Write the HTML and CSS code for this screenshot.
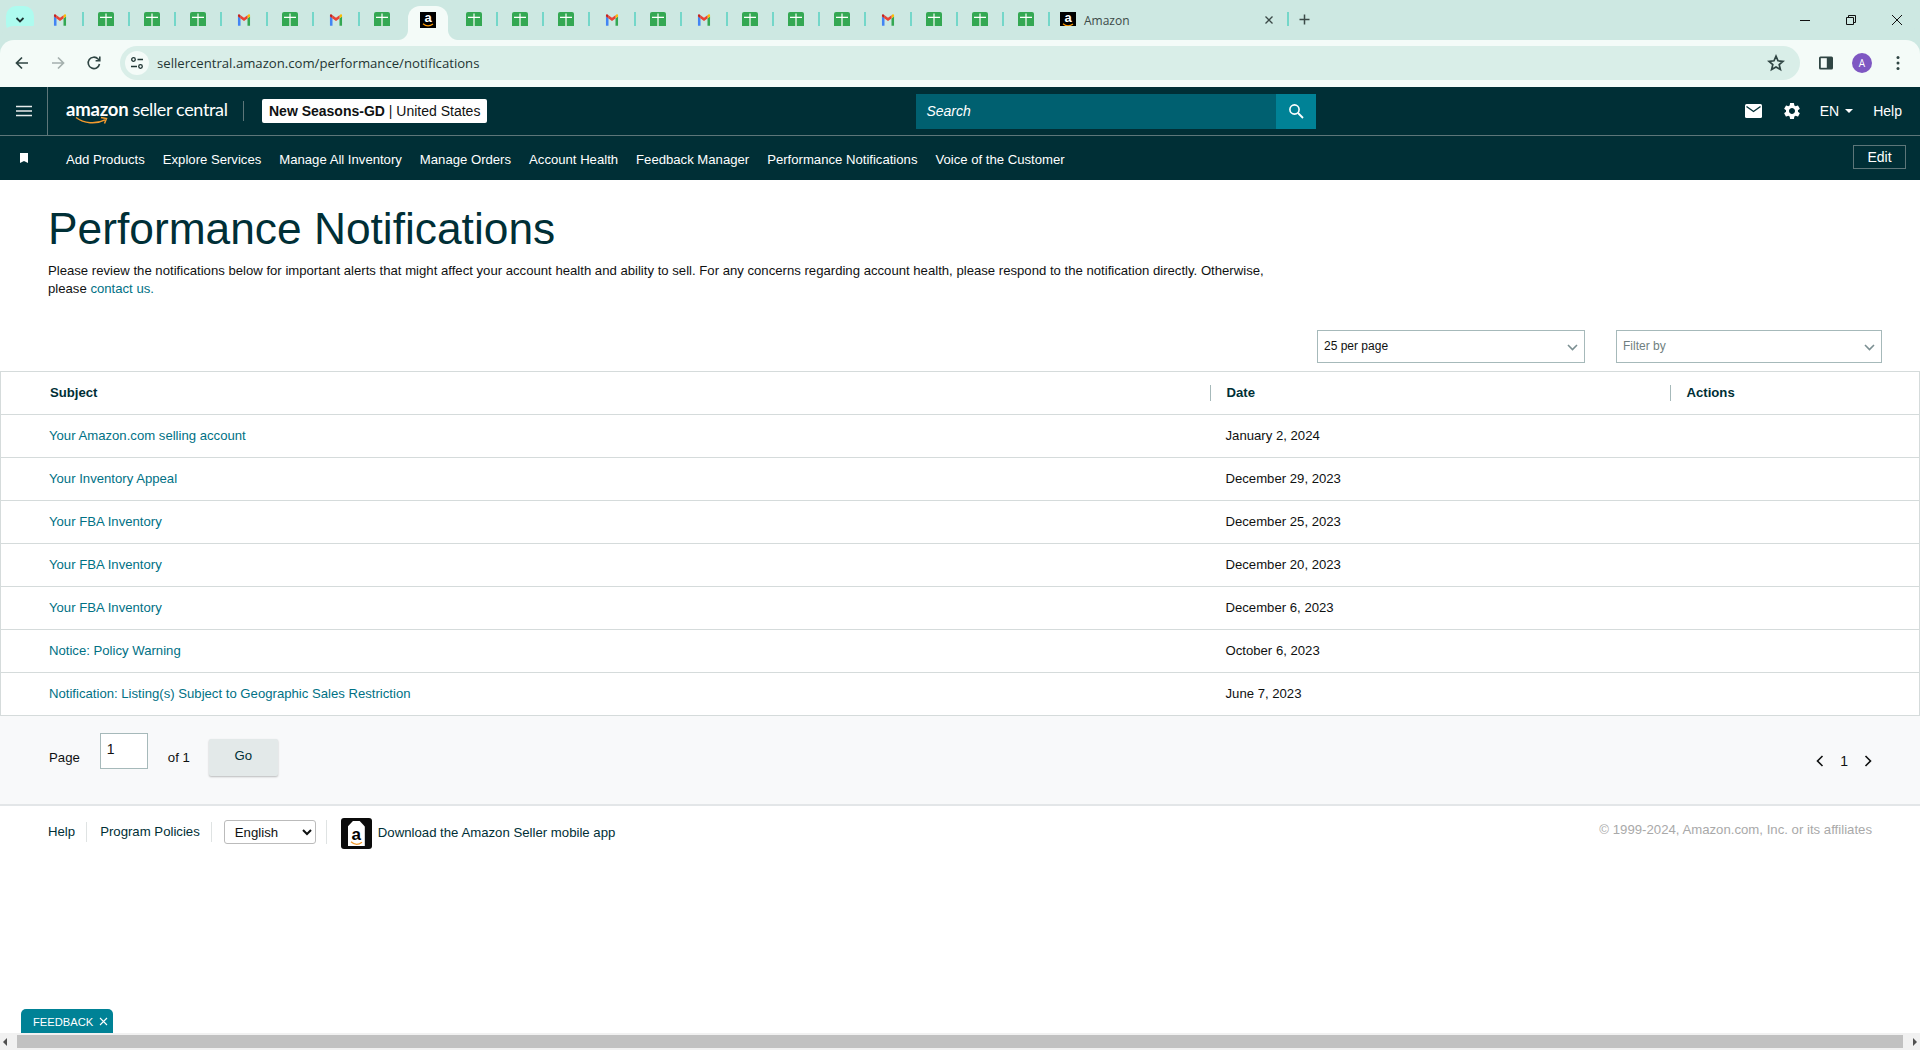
FILE: index.html
```html
<!DOCTYPE html>
<html lang="en">
<head>
<meta charset="utf-8">
<title>Performance Notifications</title>
<link rel="stylesheet" href="styles.css">
</head>
<body>
<svg class="defs" width="0" height="0" aria-hidden="true">
  <symbol id="gm" viewBox="0 0 16 13">
    <path d="M1.1 13V2.5L4 4.7V13H1.1Z" fill="#4285f4"/>
    <path d="M12 13V4.7l2.9-2.2V13H12Z" fill="#34a853"/>
    <path d="M12 4.7V1l1-.7c.9-.6 1.9 0 1.9 1v1.2L12 4.7Z" fill="#fbbc04"/>
    <path d="M4 4.7V1l4 3 4-3v3.7L8 7.7 4 4.7Z" fill="#ea4335"/>
    <path d="M1.1 2.5V1.3c0-1 1-1.600 1.900-1L4 1v3.700L1.100 2.500Z" fill="#c5221f"/>
  </symbol>
  <symbol id="sh" viewBox="0 0 16 16">
    <rect width="16" height="16" rx="2" fill="#34a853"/>
    <path d="M2 4.800h12v1.200H2zM7.400 1.500h1.200v13H7.400z" fill="#fff"/>
  </symbol>
</svg>

<div class="tabstrip">
  <div class="tab-menu"><svg width="12" height="12" viewBox="0 0 12 12"><path d="M2.500 4l3.500 3.500L9.500 4" fill="none" stroke="#1f3533" stroke-width="1.800"/></svg></div>
  <div class="tabs">
    <div class="tab sep"><svg class="gm"><use href="#gm"/></svg></div>
    <div class="tab sep"><svg class="sh"><use href="#sh"/></svg></div>
    <div class="tab sep"><svg class="sh"><use href="#sh"/></svg></div>
    <div class="tab sep"><svg class="sh"><use href="#sh"/></svg></div>
    <div class="tab sep"><svg class="gm"><use href="#gm"/></svg></div>
    <div class="tab sep"><svg class="sh"><use href="#sh"/></svg></div>
    <div class="tab sep"><svg class="gm"><use href="#gm"/></svg></div>
    <div class="tab"><svg class="sh"><use href="#sh"/></svg></div>
    <div class="tab active"><span class="fav">a<svg width="12" height="4" viewBox="0 0 12 4"><path d="M1 .8c3 2.400 7 2.400 10 .2" fill="none" stroke="#f90" stroke-width="1.300"/></svg></span></div>
    <div class="tab sep"><svg class="sh"><use href="#sh"/></svg></div>
    <div class="tab sep"><svg class="sh"><use href="#sh"/></svg></div>
    <div class="tab sep"><svg class="sh"><use href="#sh"/></svg></div>
    <div class="tab sep"><svg class="gm"><use href="#gm"/></svg></div>
    <div class="tab sep"><svg class="sh"><use href="#sh"/></svg></div>
    <div class="tab sep"><svg class="gm"><use href="#gm"/></svg></div>
    <div class="tab sep"><svg class="sh"><use href="#sh"/></svg></div>
    <div class="tab sep"><svg class="sh"><use href="#sh"/></svg></div>
    <div class="tab sep"><svg class="sh"><use href="#sh"/></svg></div>
    <div class="tab sep"><svg class="gm"><use href="#gm"/></svg></div>
    <div class="tab sep"><svg class="sh"><use href="#sh"/></svg></div>
    <div class="tab sep"><svg class="sh"><use href="#sh"/></svg></div>
    <div class="tab sep"><svg class="sh"><use href="#sh"/></svg></div>
    <div class="tab-wide">
      <span class="fav">a<svg width="12" height="4" viewBox="0 0 12 4"><path d="M1 .8c3 2.400 7 2.400 10 .2" fill="none" stroke="#f90" stroke-width="1.300"/></svg></span>
      <span class="tab-title">Amazon</span>
      <svg class="tab-x" width="10" height="10" viewBox="0 0 10 10"><path d="M1.500 1.500l7 7M8.500 1.500l-7 7" stroke="#3c4a48" stroke-width="1.300"/></svg>
    </div>
    <svg class="tab-new" width="11" height="11" viewBox="0 0 11 11"><path d="M5.500 .5v10M.5 5.500h10" stroke="#3c4a48" stroke-width="1.500"/></svg>
  </div>
  <div class="win">
    <svg width="12" height="12" viewBox="0 0 12 12"><path d="M1 6.500h10" stroke="#111" stroke-width="1"/></svg>
    <svg width="12" height="12" viewBox="0 0 12 12"><path d="M1.500 3.500h7v7h-7zM3.500 3.500v-2h7v7h-2" fill="none" stroke="#111" stroke-width="1"/></svg>
    <svg width="12" height="12" viewBox="0 0 12 12"><path d="M1 1l10 10M11 1L1 11" stroke="#111" stroke-width="1"/></svg>
  </div>
</div>

<div class="toolbar">
  <svg class="tb-back" width="16" height="16" viewBox="0 0 16 16"><path d="M14 8H3M8 2.500L2.500 8 8 13.500" fill="none" stroke="#2f4543" stroke-width="1.700"/></svg>
  <svg class="tb-fwd" width="16" height="16" viewBox="0 0 16 16"><path d="M2 8h11M8 2.500L13.500 8 8 13.500" fill="none" stroke="#a4b0ae" stroke-width="1.700"/></svg>
  <svg class="tb-rel" width="16" height="16" viewBox="0 0 16 16"><path d="M13.500 9a5.700 5.700 0 1 1-1.400-5L13.600 5.500M13.800 1.500v4.200H9.600" fill="none" stroke="#2f4543" stroke-width="1.600"/></svg>
  <div class="omni">
    <span class="site"><svg width="14" height="14" viewBox="0 0 14 14"><circle cx="3.500" cy="3.500" r="1.800" fill="none" stroke="#1f3533" stroke-width="1.300"/><path d="M7.500 3.500H13M1 10.500h6" stroke="#1f3533" stroke-width="1.500"/><circle cx="10.500" cy="10.500" r="1.800" fill="none" stroke="#1f3533" stroke-width="1.300"/></svg></span>
    <span class="url">sellercentral.amazon.com/performance/notifications</span>
    <svg class="star" width="18" height="18" viewBox="0 0 18 18"><path d="M9 2.200l2 4.600 5 .5-3.800 3.300 1.200 4.900L9 12.900l-4.400 2.600 1.200-4.900L2 7.300l5-.5L9 2.200Z" fill="none" stroke="#2f4543" stroke-width="1.700"/></svg>
  </div>
  <svg class="tb-side" width="16" height="16" viewBox="0 0 16 16"><rect x="1" y="1.500" width="14" height="13" rx="1.500" fill="#2f4543"/><rect x="2.800" y="3.200" width="6" height="9.600" fill="#f4fbf8"/></svg>
  <span class="avatar">A</span>
  <svg class="tb-dots" width="4" height="16" viewBox="0 0 4 16"><circle cx="2" cy="2.500" r="1.500" fill="#2f4543"/><circle cx="2" cy="8" r="1.500" fill="#2f4543"/><circle cx="2" cy="13.500" r="1.500" fill="#2f4543"/></svg>
</div>

<header class="sc-top">
  <div class="burger"><svg width="16" height="12" viewBox="0 0 16 12"><path d="M0 1.500h16M0 6h16M0 10.500h16" stroke="#e7ecec" stroke-width="1.700"/></svg></div>
  <div class="logo"><span class="logo-a">amazon<svg class="smile" width="34" height="9" viewBox="0 0 34 9"><path d="M1 1.500c8 6 20 7 29 2.300M26 1.500l5.500 1-2 5" fill="none" stroke="#f29a2e" stroke-width="1.500"/></svg></span><span class="logo-b">seller central</span></div>
  <div class="vr"></div>
  <div class="store"><b>New Seasons-GD</b> | United States</div>
  <div class="search">
    <span class="search-text">Search</span>
    <span class="search-btn"><svg width="16" height="16" viewBox="0 0 16 16"><circle cx="6.500" cy="6.500" r="4.600" fill="none" stroke="#fff" stroke-width="1.600"/><path d="M10 10l5 5" stroke="#fff" stroke-width="1.800"/></svg></span>
  </div>
  <div class="top-right">
    <svg class="mail" width="17" height="14" viewBox="0 0 17 14"><rect width="17" height="14" rx="1.500" fill="#fff"/><path d="M1.500 2.500l7 5 7-5" fill="none" stroke="#002f36" stroke-width="1.400"/></svg>
    <svg class="gear" width="20" height="20" viewBox="0 0 24 24"><path fill="#fff" d="M19.140 12.940c.04-.3.060-.61.060-.94 0-.32-.02-.64-.07-.94l2.030-1.580a.49.49 0 0 0 .12-.61l-1.920-3.320a.488.488 0 0 0-.59-.22l-2.390.96c-.5-.38-1.030-.7-1.620-.94l-.36-2.540a.484.484 0 0 0-.48-.41h-3.840c-.24 0-.43.17-.47.41l-.36 2.540c-.59.24-1.130.57-1.620.94l-2.390-.96c-.22-.08-.47 0-.59.22L2.740 8.870c-.12.21-.08.47.12.61l2.030 1.580c-.05.3-.09.63-.09.94s.02.64.07.94l-2.030 1.580a.49.49 0 0 0-.12.61l1.920 3.320c.12.22.37.29.59.22l2.390-.96c.5.38 1.030.7 1.620.94l.36 2.540c.05.24.24.41.48.41h3.840c.24 0 .44-.17.47-.41l.36-2.540c.59-.24 1.130-.56 1.620-.94l2.390.96c.22.08.47 0 .59-.22l1.920-3.320c.12-.22.07-.47-.12-.61l-2.010-1.580zM12 15.600c-1.980 0-3.600-1.620-3.600-3.600s1.620-3.600 3.600-3.600 3.600 1.620 3.600 3.600-1.620 3.600-3.600 3.600z"/></svg>
    <span class="lang">EN<i class="caret"></i></span>
    <span class="help">Help</span>
  </div>
</header>

<nav class="sc-nav">
  <svg class="bookmark" width="8" height="10" viewBox="0 0 8 10"><path d="M0 0h8v10L4 8 0 10Z" fill="#fff"/></svg>
  <div class="nav-items">
    <a>Add Products</a><a>Explore Services</a><a>Manage All Inventory</a><a>Manage Orders</a><a>Account Health</a><a>Feedback Manager</a><a>Performance Notifications</a><a>Voice of the Customer</a>
  </div>
  <button class="edit">Edit</button>
</nav>

<main class="page">
  <div class="intro">
    <h1>Performance Notifications</h1>
    <p>Please review the notifications below for important alerts that might affect your account health and ability to sell. For any concerns regarding account health, please respond to the notification directly. Otherwise, please <a class="link">contact us.</a></p>
  </div>
  <div class="tools">
    <div class="dd">25 per page<svg width="11" height="7" viewBox="0 0 11 7"><path d="M1 1l4.500 4.500L10 1" fill="none" stroke="#7b8f92" stroke-width="1.600"/></svg></div>
    <div class="dd muted">Filter by<svg width="11" height="7" viewBox="0 0 11 7"><path d="M1 1l4.500 4.500L10 1" fill="none" stroke="#7b8f92" stroke-width="1.600"/></svg></div>
  </div>
  <table class="tbl">
    <colgroup><col class="c1"><col class="c2"><col class="c3"></colgroup>
    <thead>
      <tr><th class="th-subject"><span class="th-lab">Subject</span></th><th><span class="th-sep">Date</span></th><th><span class="th-sep">Actions</span></th></tr>
    </thead>
    <tbody>
      <tr><td><a class="link">Your Amazon.com selling account</a></td><td>January 2, 2024</td><td></td></tr>
      <tr><td><a class="link">Your Inventory Appeal</a></td><td>December 29, 2023</td><td></td></tr>
      <tr><td><a class="link">Your FBA Inventory</a></td><td>December 25, 2023</td><td></td></tr>
      <tr><td><a class="link">Your FBA Inventory</a></td><td>December 20, 2023</td><td></td></tr>
      <tr><td><a class="link">Your FBA Inventory</a></td><td>December 6, 2023</td><td></td></tr>
      <tr><td><a class="link">Notice: Policy Warning</a></td><td>October 6, 2023</td><td></td></tr>
      <tr><td><a class="link">Notification: Listing(s) Subject to Geographic Sales Restriction</a></td><td>June 7, 2023</td><td></td></tr>
    </tbody>
  </table>
  <div class="pager">
    <span>Page</span>
    <input class="page-input" type="text" value="1">
    <span class="of">of 1</span>
    <button class="go">Go</button>
    <div class="pages">
      <svg width="8" height="12" viewBox="0 0 8 12"><path d="M6.500 1L1.500 6l5 5" fill="none" stroke="#0f1111" stroke-width="1.600"/></svg>
      <span>1</span>
      <svg width="8" height="12" viewBox="0 0 8 12"><path d="M1.500 1l5 5-5 5" fill="none" stroke="#0f1111" stroke-width="1.600"/></svg>
    </div>
  </div>
  <footer class="foot">
    <a class="f-item f-first">Help</a>
    <a class="f-item">Program Policies</a>
    <div class="f-item f-sel"><select class="lang-sel"><option>English</option></select></div>
    <span class="app-icon"><span class="app-tag">a<svg width="13" height="5" viewBox="0 0 13 5"><path d="M1 .8c3.500 3.200 7.500 3.200 11 .4" fill="none" stroke="#f29a2e" stroke-width="1.300"/></svg></span></span>
    <span class="app-text">Download the Amazon Seller mobile app</span>
    <span class="copy">© 1999-2024, Amazon.com, Inc. or its affiliates</span>
  </footer>
</main>

<div class="feedback">FEEDBACK<svg width="9" height="9" viewBox="0 0 9 9"><path d="M1 1l7 7M8 1L1 8" stroke="#fff" stroke-width="1.100"/></svg></div>
<div class="hscroll">
  <i class="arr-l"></i>
  <div class="thumb"></div>
  <i class="arr-r"></i>
</div>
</body>
</html>
```

FILE: styles.css
```css
* { box-sizing: border-box; }
html, body { margin: 0; height: 1050px; overflow: hidden; }
body {
  display: flex;
  flex-direction: column;
  width: 1920px;
  font-family: "Liberation Sans", Arial, sans-serif;
  font-size: 14px;
  color: #0f1111;
  background: #fff;
}
.defs { position: absolute; }

/* Browser tab strip */
.tabstrip {
  height: 40px;
  flex: none;
  background: #cde8e2;
  display: flex;
  align-items: flex-start;
  padding: 6px 0 0 6px;
}
.tab-menu {
  width: 28px;
  height: 28px;
  border-radius: 10px;
  background: #aefbef;
  display: flex;
  align-items: center;
  justify-content: center;
}
.tabs { display: flex; align-items: flex-start; margin-left: 3px; }
.tab {
  width: 46px;
  height: 28px;
  display: flex;
  align-items: center;
  justify-content: center;
  position: relative;
  margin-top: -1px;
  padding-top: 2px;
}
.tab.sep::after {
  content: "";
  position: absolute;
  right: -1px;
  top: 7px;
  width: 2px;
  height: 16px;
  background: #74d7c9;
}
.tab.active {
  width: 40px;
  height: 34px;
  margin: 0 3px;
  padding: 0 0 6px;
  background: #f4fbf8;
  border-radius: 12px 12px 0 0;
  z-index: 1;
}
.tab.active::before,
.tab.active::after {
  content: "";
  position: absolute;
  bottom: 0;
  width: 10px;
  height: 10px;
}
.tab.active::before { left: -10px; background: radial-gradient(circle at 0 0, #cde8e2 9.500px, #f4fbf8 10.500px); }
.tab.active::after { right: -10px; background: radial-gradient(circle at 100% 0, #cde8e2 9.500px, #f4fbf8 10.500px); }
.gm { width: 14px; height: 12px; }
.sh { width: 16px; height: 16px; }
.fav {
  width: 16px;
  height: 16px;
  background: #000;
  color: #fff;
  font: bold 13px/12px "Liberation Sans", sans-serif;
  display: inline-flex;
  flex-direction: column;
  align-items: center;
  flex: none;
}
.fav svg { margin-top: -1px; }
.tab-wide {
  width: 239px;
  height: 28px;
  display: flex;
  align-items: center;
  padding-left: 11px;
  margin-top: -1px;
  padding-top: 2px;
  position: relative;
}
.tab-wide::after {
  content: "";
  position: absolute;
  right: -1px;
  top: 7px;
  width: 2px;
  height: 16px;
  background: #74d7c9;
}
.tab-title { margin-left: 8px; font: 12px "Open Sans", sans-serif; color: #3c4a48; }
.tab-x { margin-left: auto; margin-right: 14px; }
.tab-new { margin: 8px 0 0 11px; }
.win { margin-left: auto; display: flex; gap: 34px; padding: 8px 17px 0 0; }

/* Browser toolbar */
.toolbar {
  height: 47px;
  flex: none;
  background: #f4fbf8;
  border-radius: 14px 14px 0 0;
  display: flex;
  align-items: flex-start;
  position: relative;
  box-shadow: 0 -14px 0 #cde8e2;
  padding: 15px 0 0 14px;
}
.tb-fwd { margin-left: 20px; }
.tb-rel { margin-left: 20px; }
.omni {
  width: 1680px;
  height: 34px;
  margin: -9px 0 0 18px;
  border-radius: 17px;
  background: #d9eee8;
  display: flex;
  align-items: center;
  padding: 0 15px 0 5px;
}
.site {
  width: 24px;
  height: 24px;
  border-radius: 50%;
  background: #f4fbf8;
  display: flex;
  align-items: center;
  justify-content: center;
}
.url { margin-left: 8px; font: 13.150px "Open Sans", sans-serif; color: #1f3533; }
.star { margin-left: auto; }
.tb-side { margin-left: 18px; }
.avatar {
  width: 20px;
  height: 20px;
  margin: -2px 0 0 18px;
  border-radius: 50%;
  background: #7e57c2;
  color: #fff;
  font: 10px/20px "Open Sans", sans-serif;
  text-align: center;
}
.tb-dots { margin-left: 24px; }

/* Seller Central header */
.sc-top {
  height: 49px;
  flex: none;
  background: #002f36;
  border-bottom: 1px solid #5d7679;
  display: flex;
  align-items: center;
  color: #fff;
}
.burger {
  width: 48px;
  height: 48px;
  border-right: 1px solid #5d7679;
  display: flex;
  align-items: center;
  justify-content: center;
}
.logo { margin-left: 18px; display: flex; align-items: baseline; height: 30px; padding-top: 2px; width: 160px; white-space: nowrap; }
.logo-a { font: 700 18.500px/22px "Lato", sans-serif; position: relative; letter-spacing: -.2px; }
.smile { position: absolute; left: 9px; top: 18px; }
.logo-b { margin-left: 4px; font: 400 18px/22px "Lato", sans-serif; letter-spacing: -.35px; }
.vr { width: 1px; height: 20px; margin-left: 17px; background: #5d7679; }
.store {
  margin-left: 18px;
  height: 24px;
  padding: 0 7px;
  background: #fff;
  border-radius: 2px;
  color: #0f1111;
  font-size: 14px;
  line-height: 24px;
  white-space: nowrap;
}
.search {
  width: 400px;
  height: 35px;
  margin-left: 429px;
  background: #006070;
  display: flex;
  align-items: center;
  justify-content: space-between;
  padding-left: 10px;
}
.search-text { font-style: italic; font-size: 14px; color: #fff; }
.search-btn {
  width: 40px;
  height: 35px;
  background: #008296;
  display: flex;
  align-items: center;
  justify-content: center;
}
.top-right { margin-left: auto; display: flex; align-items: center; padding-right: 18px; }
.gear { margin-left: 20px; }
.lang { margin-left: 18px; font-size: 14px; display: flex; align-items: center; }
.caret {
  width: 0;
  height: 0;
  margin-left: 6px;
  border: 4.500px solid transparent;
  border-top-color: #fff;
  border-bottom: 0;
}
.help { margin-left: 20px; font-size: 14px; }

.sc-nav {
  height: 44px;
  flex: none;
  background: #002f36;
  color: #fff;
  display: flex;
  align-items: center;
  padding: 2px 14px 0 20px;
}
.bookmark { margin-top: -2px; }
.nav-items { margin-left: 38px; display: flex; gap: 18px; }
.nav-items a { font-size: 13.130px; white-space: nowrap; }
.edit {
  margin: -4px 0 0 auto;
  width: 53px;
  height: 24px;
  background: transparent;
  border: 1px solid #5d7679;
  color: #fff;
  font: 14px "Liberation Sans", sans-serif;
  padding: 0;
}

/* Page */
.page { flex: 1; min-height: 0; display: flex; flex-direction: column; }
.intro { padding: 0 48px; }
h1 {
  margin: 22px 0 0;
  font-size: 44.300px;
  line-height: 54px;
  font-weight: 400;
  color: #002f36;
}
.intro p { margin: 6px 0 0; width: 1240px; font-size: 13.150px; line-height: 18px; }
.link { color: #007185; }
.tools { display: flex; justify-content: flex-end; gap: 31px; margin-top: 32px; padding-right: 38px; }
.dd {
  width: 268px;
  height: 33px;
  border: 1px solid #a6b9ba;
  display: flex;
  align-items: center;
  justify-content: space-between;
  padding: 0 6px 2px;
  font-size: 12px;
}
.dd svg { margin-top: 4px; }
.dd.muted { width: 266px; color: #6f7f80; }

.tbl {
  margin-top: 8px;
  width: 100%;
  table-layout: fixed;
  border-collapse: collapse;
  border: 1px solid #d5dbdb;
  flex: none;
}
.c1 { width: 1209px; }
.c2 { width: 460px; }
.tbl th, .tbl td {
  height: 43px;
  padding: 0 0 0 16px;
  border-bottom: 1px solid #d5dbdb;
  font-size: 13.150px;
  text-align: left;
}
.tbl td { padding-bottom: 2px; }
.tbl td:first-child { padding-left: 48px; }
.tbl th { font-weight: 700; color: #002f36; padding-left: 0; }
.tbl .th-subject { padding-left: 49px; }
.th-lab { display: block; line-height: 16px; }
.th-sep { display: block; border-left: 1px solid #a6b9ba; padding-left: 16px; line-height: 16px; }

.pager {
  height: 90px;
  flex: none;
  background: #f8f9fa;
  border-bottom: 2px solid #e3e6e8;
  display: flex;
  align-items: center;
  padding: 0 48px 6px 49px;
  font-size: 13.200px;
}
.page-input {
  width: 48px;
  height: 36px;
  margin: -12px 0 0 20px;
  border: 1px solid #a6b9ba;
  padding: 0 0 4px 6px;
  font: 14px "Liberation Sans", sans-serif;
  color: #0f1111;
  background: #fff;
  border-radius: 0;
}
.of { margin-left: 20px; }
.go {
  width: 69px;
  height: 37px;
  margin: 0 0 0 19px;
  background: #e3e9e9;
  border: 0;
  border-radius: 2px;
  box-shadow: 0 1px 2px rgba(0,0,0,.25);
  font: 13.200px "Liberation Sans", sans-serif;
  color: #002f36;
  padding: 0 0 3px;
}
.pages { margin-left: auto; display: flex; align-items: center; gap: 16px; padding-top: 8px; font-size: 14px; }

.foot {
  height: 50px;
  flex: none;
  display: flex;
  align-items: center;
  padding: 2px 48px 0;
  font-size: 13.200px;
  color: #002f36;
}
.f-item {
  padding: 0 11px 0 0;
  margin-right: 12px;
  height: 20px;
  line-height: 20px;
  border-right: 1px solid #dfe3e3;
  display: block;
}
.f-first { margin-right: 13px; }
.f-sel { margin-right: 14px; padding-right: 10px; height: 24px; display: flex; align-items: center; }
.lang-sel {
  width: 92px;
  height: 24px;
  border: 1px solid #bbb;
  border-radius: 3px;
  background: #fff;
  padding-left: 6px;
  font: 13.200px "Liberation Sans", sans-serif;
  color: #0f1111;
}
.app-icon {
  width: 31px;
  height: 31px;
  margin-top: 2px;
  border-radius: 3px;
  background: #0b0b0b;
  display: flex;
  justify-content: center;
  align-items: center;
}
.app-tag {
  width: 17px;
  height: 25px;
  margin-top: 1px;
  background: #fff;
  clip-path: polygon(30% 0, 70% 0, 100% 22%, 100% 100%, 0 100%, 0 22%);
  color: #000;
  font: bold 17px/17px "Liberation Sans", sans-serif;
  display: flex;
  flex-direction: column;
  align-items: center;
  padding-top: 5px;
}
.app-tag svg { margin-top: -2px; flex: none; }
.app-text { margin-left: 6px; }
.copy { margin-left: auto; padding-bottom: 6px; color: #a9a9a9; }

/* Scrollbar and overlay */
.feedback {
  position: fixed;
  left: 21px;
  bottom: 17px;
  width: 92px;
  height: 24px;
  background: #008296;
  border-radius: 5px 5px 0 0;
  color: #fff;
  font-size: 11.200px;
  display: flex;
  align-items: center;
  gap: 6px;
  padding: 1px 0 0 12px;
}
.hscroll {
  position: fixed;
  left: 0;
  right: 0;
  bottom: 0;
  height: 17px;
  background: #f1f1f1;
  display: flex;
  align-items: center;
}
.thumb { position: absolute; left: 17px; right: 17px; top: 2px; height: 13px; background: #c1c1c1; }
.arr-l, .arr-r { position: absolute; width: 0; height: 0; border: 4px solid transparent; top: 4.500px; }
.arr-l { left: 3px; border-right-color: #505050; border-left: 0; }
.arr-r { right: 3px; border-left-color: #505050; border-right: 0; }
```
